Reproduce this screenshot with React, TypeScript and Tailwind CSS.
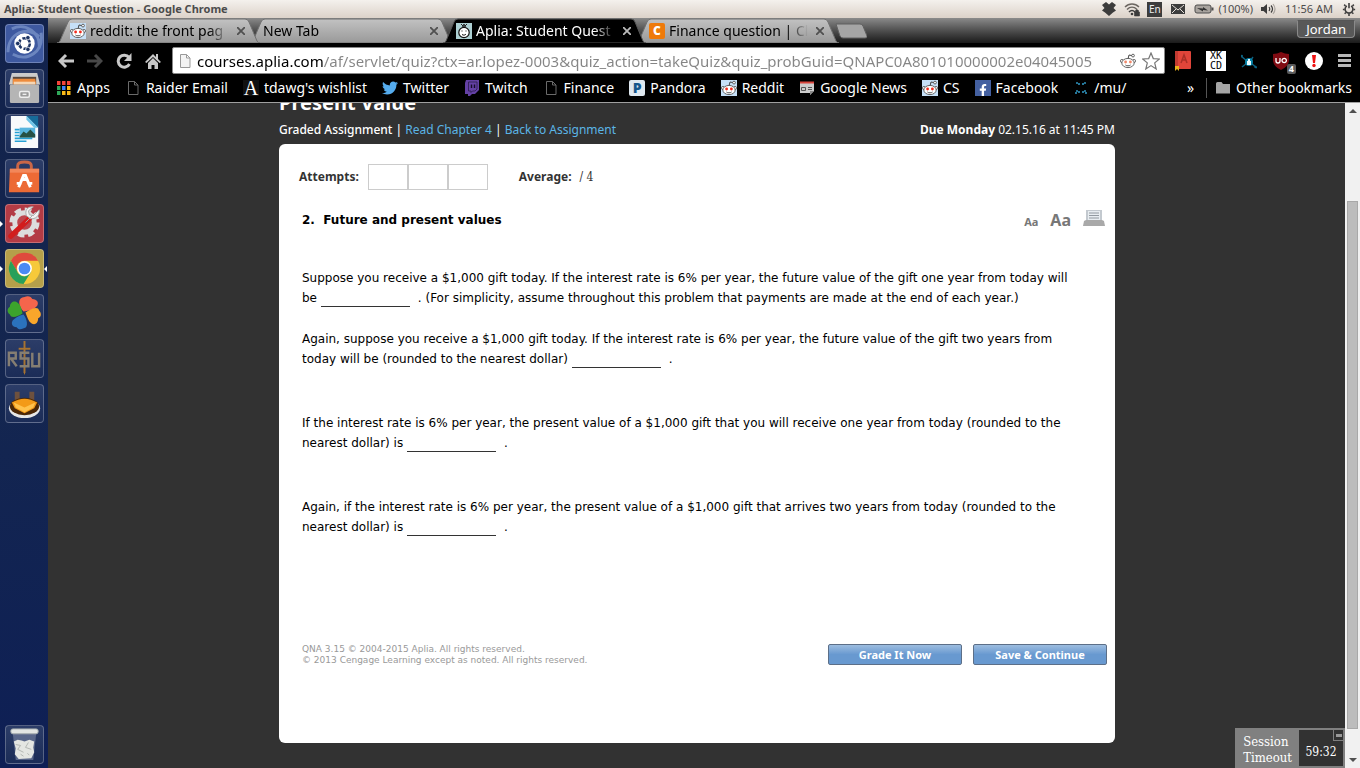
import type { ReactNode } from "react";
import { FaFacebookF, FaTwitter } from "react-icons/fa";

const UI_FONT = "font-['Noto_Sans','Open_Sans',sans-serif]";

function RedditIcon({ plain = false }: { plain?: boolean }) {
  return (
    <svg className="size-4 shrink-0" viewBox="0 0 16 16" aria-hidden="true">
      {!plain && <rect width="16" height="16" fill="#c6e0f7" />}
      <path d="M8 6 9 2l3 .6" fill="none" stroke="#444" strokeWidth="1" />
      <circle cx="13" cy="2.6" r="1.4" fill="#fff" stroke="#444" strokeWidth=".8" />
      <circle cx="2" cy="8" r="1.6" fill="#fff" stroke="#555" strokeWidth=".8" />
      <circle cx="14" cy="8" r="1.6" fill="#fff" stroke="#555" strokeWidth=".8" />
      <ellipse cx="8" cy="10" rx="6.2" ry="4.6" fill="#fff" stroke="#555" strokeWidth=".9" />
      <circle cx="5.6" cy="9" r="1.4" fill={plain ? "#f0886a" : "#f22b1d"} />
      <circle cx="10.4" cy="9" r="1.4" fill={plain ? "#f0886a" : "#f22b1d"} />
      <path d="M5.4 12c1.6 1.1 3.6 1.1 5.2 0" fill="none" stroke="#444" strokeWidth=".9" />
    </svg>
  );
}

function PageIcon({ light = false }: { light?: boolean }) {
  return (
    <svg className="size-4 shrink-0" viewBox="0 0 16 16" aria-hidden="true">
      <path
        d="M3.500 1.500h6l3.500 3.500v9.500h-9.500zM9.500 1.500v3.500h3.500"
        fill={light ? "#f3f3f3" : "none"}
        stroke={light ? "#999" : "#6b6b6b"}
      />
    </svg>
  );
}

function ApliaIcon() {
  return (
    <svg className="size-4 shrink-0" viewBox="0 0 16 16" aria-hidden="true">
      <rect width="16" height="16" fill="#add0d3" />
      <path d="M5 1l2 2 1-2 1 2 2-2M6 4l2-1 2 1" fill="none" stroke="#222" />
      <circle cx="8" cy="9.500" r="5.200" fill="#fff" stroke="#111" strokeWidth="1.200" />
      <path d="M5.500 8h1M9.500 8h1M6 11.500c1.500 1 3 .8 4-.5" fill="none" stroke="#111" />
    </svg>
  );
}

function AppsIcon() {
  const colors = ["#f4453a", "#f4453a", "#f4453a", "#2fa85a", "#3f83f8", "#f9b917", "#2fa85a", "#f9b917", "#f9b917"];
  return (
    <svg className="size-4 shrink-0" viewBox="0 0 16 16" aria-hidden="true">
      {colors.map((c, i) => (
        <rect key={i} x={1 + (i % 3) * 5} y={1 + Math.floor(i / 3) * 5} width="3.500" height="4" fill={c} />
      ))}
    </svg>
  );
}

function TwitchIcon() {
  return (
    <svg className="size-4 shrink-0" viewBox="0 0 16 16" aria-hidden="true">
      <path d="M2 0h13v10l-4 4H8l-2 2H4v-2H1V3z" fill="#6441a5" />
      <path d="M4.500 2h8.500v7l-2 2H8.500L7 12.500V11H4.500z" fill="none" stroke="#2c1c4b" strokeWidth=".8" />
      <path d="M7.500 4.500v3.500M10.500 4.500v3.500" stroke="#150d26" strokeWidth="1.400" />
    </svg>
  );
}

function NewsIcon() {
  return (
    <svg className="size-4 shrink-0" viewBox="0 0 16 16" aria-hidden="true">
      <path d="M1 2h14v9l-4 4v-2H1z" fill="#ccc" />
      <path d="M1 2.500h14" stroke="#d8453c" strokeWidth="2" />
      <path d="M2.500 7.500h4v3h-4zM9 7.500h4M9 9.500h4" fill="none" stroke="#555" />
      <path d="m11 15 4-4h-4z" fill="#888" />
    </svg>
  );
}

function MuIcon() {
  return (
    <svg className="size-4 shrink-0" viewBox="0 0 16 16" aria-hidden="true">
      <path
        d="M3 3h3v3M13 3h-3v3M3 14v-3h3v3M13 14v-3h-3v3"
        fill="none"
        stroke="#2f93bd"
        strokeWidth="1.600"
        strokeDasharray="2 1"
      />
    </svg>
  );
}

function FolderIcon() {
  return (
    <svg className="size-4 shrink-0" viewBox="0 0 16 16" aria-hidden="true">
      <path d="M1 3.500q0-1.500 1.500-1.500h4l1.500 2h7v9.500H1z" fill="#a5a5a5" />
    </svg>
  );
}

function LetterIcon({ children, className }: { children: ReactNode; className: string }) {
  return (
    <span aria-hidden="true" className={`flex size-4 shrink-0 items-center justify-center leading-4 ${className}`}>
      {children}
    </span>
  );
}

const bookmarks: { label: string; icon: ReactNode }[] = [
  { label: "Apps", icon: <AppsIcon /> },
  { label: "Raider Email", icon: <PageIcon /> },
  {
    label: "tdawg's wishlist",
    icon: <LetterIcon className="bg-[#111] font-['Liberation_Serif',serif] text-xl text-white">A</LetterIcon>,
  },
  { label: "Twitter", icon: <FaTwitter className="size-4 shrink-0 text-[#55acee]" /> },
  { label: "Twitch", icon: <TwitchIcon /> },
  { label: "Finance", icon: <PageIcon /> },
  {
    label: "Pandora",
    icon: <LetterIcon className="rounded-xs bg-[#dfe8f0] text-sm font-black text-[#14568c]">P</LetterIcon>,
  },
  { label: "Reddit", icon: <RedditIcon /> },
  { label: "Google News", icon: <NewsIcon /> },
  { label: "CS", icon: <RedditIcon /> },
  {
    label: "Facebook",
    icon: (
      <span className="flex size-4 shrink-0 items-end justify-center bg-[#4460a0]">
        <FaFacebookF className="size-3 text-white" />
      </span>
    ),
  },
  { label: "/mu/", icon: <MuIcon /> },
];

function SystemBar() {
  return (
    <header className="flex h-[18px] shrink-0 items-center justify-between bg-linear-to-b from-[#f4f1ed] to-[#dcd2c9] px-1 text-[#4c4c4c]">
      <span className="text-[11px] leading-4 font-bold">Aplia: Student Question - Google Chrome</span>
      <div className="flex items-center gap-[7px] text-[11px] leading-4">
        <svg className="size-4" viewBox="0 0 16 16" aria-hidden="true">
          <path d="m5 1 3 2.500L11 1l4 3-2.500 3L15 9.500l-3 2L8 15l-4-3.500-3-2L3.500 7 1 4z" fill="#3c3c3c" />
        </svg>
        <svg className="size-4" viewBox="0 0 16 16" fill="none" aria-hidden="true">
          <path d="M1 6c4-4 10-4 14 0M3 8.500c3-3 7-3 10 0" stroke="#6b6661" strokeWidth="1.400" />
          <path d="M5 11c2-2 4-2 6 0" stroke="#3c3c3c" strokeWidth="1.600" />
          <circle cx="8" cy="13" r="1.300" fill="#3c3c3c" />
          <path d="M10.500 11h5v4h-5zM11.500 11V9.500q1.500-1.500 3 0V11" fill="#3c3c3c" stroke="#3c3c3c" strokeWidth=".6" />
        </svg>
        <span className="flex h-[15px] w-[15px] items-center justify-center bg-[#3c3c3c] text-[10px] text-[#eee]">En</span>
        <svg className="mx-px size-4" viewBox="0 0 16 16" aria-hidden="true">
          <rect x="1" y="3" width="14" height="10" fill="#3c3c3c" />
          <path d="m2 4 6 5 6-5M2 12l4-4M14 12l-4-4" fill="none" stroke="#e8e2dc" />
        </svg>
        <span className="flex items-center gap-1">
          <svg className="h-4 w-5" viewBox="0 0 20 16" aria-hidden="true">
            <rect x="1" y="4" width="16" height="8" rx="2" fill="#a9a49f" stroke="#4c4c4c" />
            <path d="M18.500 6.500v3" stroke="#4c4c4c" strokeWidth="2" />
            <path d="m3 7 6 .5V6l5 3.500-5-.5v1.500z" fill="#333" />
          </svg>
          (100%)
        </span>
        <svg className="size-4" viewBox="0 0 16 16" fill="none" aria-hidden="true">
          <path d="M1 6h2.500L7 3v10l-3.500-3H1z" fill="#3c3c3c" />
          <path d="M9 6q1.500 2 0 4M11 4.500q3 3.500 0 7" stroke="#3c3c3c" strokeWidth="1.200" />
          <path d="M13 3q4 5 0 10" stroke="#aaa49e" strokeWidth="1.200" />
        </svg>
        <span className="mx-0.5">11:56 AM</span>
        <svg className="size-3.5" viewBox="0 0 16 16" fill="none" stroke="#3c3c3c" aria-hidden="true">
          <path d="M5.500 4.500a4.500 4.500 0 1 0 5 0M8 1v6" strokeWidth="1.800" />
          <path d="M1 8.500h2M13 8.500h2M3 13.500l1.500-1.500M13 13.500l-1.500-1.500M8 13.500V16M2.500 3 4 4.500M13.500 3 12 4.500" strokeWidth="1.800" />
        </svg>
      </div>
    </header>
  );
}

function LaunchTile({ label, tint, left, right, children }: { label: string; tint: string; left?: boolean; right?: boolean; children: ReactNode }) {
  return (
    <button
      type="button"
      aria-label={label}
      className={`relative ml-[5px] flex h-[39px] w-[39px] items-center justify-center rounded-sm border border-white/25 ${tint}`}
    >
      <svg className="h-[37px] w-[37px]" viewBox="0 0 38 38" aria-hidden="true">
        {children}
      </svg>
      {left && <span className="absolute top-4 -left-1.5 border-y-3 border-l-3 border-y-transparent border-l-white" />}
      {right && <span className="absolute top-4 -right-1 border-y-3 border-r-3 border-y-transparent border-r-white" />}
    </button>
  );
}

function Launcher() {
  const glass = "bg-linear-to-b from-[#2c3d68] to-[#1b2c57]";
  return (
    <nav className="flex w-12 shrink-0 flex-col gap-1.5 bg-linear-to-b from-[#12224b] via-[#142650] to-[#0e1f55] pt-1.5 pb-1">
      <LaunchTile label="Dash" tint="bg-[#3e59a0]">
        <path d="M2 28C2 8 22 0 34 12M36 8c3 20-14 30-29 22M6 4c14-7 30 4 28 20" fill="none" stroke="#8ba3d4" strokeWidth="3" opacity=".6" />
        <circle cx="19" cy="19" r="10.500" fill="#fff" />
        <circle cx="19" cy="19" r="5.500" fill="none" stroke="#1e3565" strokeWidth="2.600" strokeDasharray="9.500 2" />
        <circle cx="12" cy="19" r="2.300" fill="#1e3565" stroke="#fff" strokeWidth=".8" />
        <circle cx="22.500" cy="13" r="2.300" fill="#1e3565" stroke="#fff" strokeWidth=".8" />
        <circle cx="22.500" cy="25" r="2.300" fill="#1e3565" stroke="#fff" strokeWidth=".8" />
      </LaunchTile>
      <LaunchTile label="Files" tint={glass}>
        <path d="M6 3h26l3 12H3z" fill="#ccc" />
        <path d="M7 7h24v10H7z" fill="#594a40" />
        <path d="M7 9h23l1 6H7z" fill="#ee8b3c" />
        <path d="M8 12h22v3H8z" fill="#f5d6b4" />
        <rect x="4" y="15" width="30" height="19" rx="1.500" fill="#b5b5b5" />
        <rect x="14" y="22" width="10" height="6" rx="1.500" fill="#999" stroke="#eee" strokeWidth="1.500" />
        <path d="M17 25h4" stroke="#eee" strokeWidth="1.500" />
      </LaunchTile>
      <LaunchTile label="Writer" tint={glass}>
        <path d="M5 1h18l10 10v23H5z" fill="#f8fafb" />
        <path d="M21 1h12v12z" fill="#176b99" />
        <path d="M21 1v4l8 8h4z" fill="#6dc4e7" />
        <path d="M9 15h5M9 18h5M9 21h5M9 24h18M9 27h12" stroke="#27a1d4" strokeWidth="1.600" />
        <rect x="14" y="13" width="16" height="10" fill="#58b5de" />
        <path d="m14 22 4-5 3 2 4-4 5 5v3H14z" fill="#265145" />
      </LaunchTile>
      <LaunchTile label="Software Center" tint={glass}>
        <path d="M12 12V6q0-4 7-4t7 4v6" fill="none" stroke="#c96647" strokeWidth="3" />
        <path d="M4 9h30v24H3z" fill="#ec6a35" />
        <path d="M4 9h30v4H4z" fill="#f2875a" />
        <path d="m13 28 5-12h2l5 12M11 24h5M22 24h5M16 20h6" fill="none" stroke="#fff" strokeWidth="3" />
      </LaunchTile>
      <LaunchTile label="System Settings" tint="bg-[#b33b45]" left>
        <circle cx="19" cy="18" r="12" fill="none" stroke="#ddd" strokeWidth="7" strokeDasharray="6 3.400" />
        <circle cx="19" cy="18" r="10" fill="#bd464e" stroke="#ddd" strokeWidth="5" />
        <path d="M5 32 24 14" stroke="#d21d1d" strokeWidth="5.500" strokeLinecap="round" />
        <path d="m20 18 7-7M34 5l-6 6-4-1-1-4 5-4c-6-1-9 4-7 9l4 3c5 1 10-3 9-9z" fill="#f2f2f2" stroke="#aaa" />
      </LaunchTile>
      <LaunchTile label="Google Chrome" tint="bg-[#b5a04a]" left right>
        <circle cx="19" cy="19" r="16" fill="#f6c93a" />
        <path d="M5 11a16 16 0 0 1 28 0H19a8 8 0 0 0-7 12z" fill="#df4a3d" />
        <path d="M5 11a16 16 0 0 0 13 24l8-13-6 5a8 8 0 0 1-9-6z" fill="#28a05a" />
        <circle cx="19" cy="19" r="7.600" fill="#fff" />
        <circle cx="19" cy="19" r="6" fill="#4a8af4" />
      </LaunchTile>
      <LaunchTile label="Photos" tint={glass}>
        <path d="M18 17C12 11 12 2 19 2c4-2 7 0 8 2 5 0 7 4 5 7-3 4-8 5-14 6z" fill="#f5654c" />
        <path d="M20 18c6-4 13-7 14-2 3 3 2 7-1 8 0 6-4 7-7 5-3-2-4-6-6-11z" fill="#f9a62b" />
        <path d="M18 20c4 5 5 13 1 14-4 2-7 1-8-1-5 0-6-4-4-7 2-2 6-5 11-6z" fill="#2b72bd" />
        <path d="M17 19c-6 4-12 5-13 1-4-3-2-7 0-8 0-5 5-7 8-4 3 2 4 6 5 11z" fill="#3ca32c" />
      </LaunchTile>
      <LaunchTile label="Game" tint={glass}>
        <path d="M18 1h2v32l-1 3-1-3z" fill="#a77331" />
        <path d="M3 27V13h7v6H5l6 8M24 13h-9v6h8v8h-9M27 13v14h7V13" fill="none" stroke="#857e72" strokeWidth="2.500" />
        <path d="M13 9h12" stroke="#a77331" strokeWidth="2" />
      </LaunchTile>
      <LaunchTile label="Media" tint={glass}>
        <path d="M9 7h5v12H9zM24 7h5v12h-5z" fill="#b46a19" opacity=".5" />
        <ellipse cx="19" cy="24" rx="16" ry="10" fill="#e7e7e7" />
        <ellipse cx="19" cy="22" rx="15" ry="9" fill="#4b2706" />
        <path d="M6 18q13-8 26 0l-3 6-10 5-10-5z" fill="#f39a18" />
        <path d="m8 18 11 5 11-5-2 5-9 5-9-5z" fill="#ffc24d" />
      </LaunchTile>
      <div className="mt-auto">
        <LaunchTile label="Trash" tint={glass}>
          <path d="M7 8h24l-3 27H10z" fill="#667394" opacity=".8" />
          <path d="m8 16 4-2 4 1 3 1 5-2 5 2-1 6 1 5-3 6-13 1-4-5 1-6z" fill="#e4e6e2" />
          <path d="m10 19 5 1-3 4 6 3M23 17l-3 5 6 2M15 29l3 2M22 28l2 2" fill="none" stroke="#b2b6b2" />
          <rect x="5" y="3" width="28" height="5" rx="2" fill="#e3e6e3" stroke="#a7afb0" />
        </LaunchTile>
      </div>
    </nav>
  );
}

function Tab({ title, icon, active, order }: { title: string; icon?: ReactNode; active?: boolean; order: string }) {
  return (
    <div className={`relative -ml-2.5 h-[25px] w-[203px] ${order} ${active ? "text-white" : "text-black"}`}>
      <svg className="absolute inset-0 size-full" viewBox="0 0 203 25" preserveAspectRatio="none" aria-hidden="true">
        <defs>
          <linearGradient id="tab" x2="0" y2="1">
            <stop stopColor="#c2c2c2" />
            <stop offset="1" stopColor="#999" />
          </linearGradient>
        </defs>
        <path
          d="M0 25q2 0 3-2l8-19q1-3 4-3h173q3 0 4 3l8 19q1 2 3 2z"
          fill={active ? "#000" : "url(#tab)"}
          stroke={active ? "#555" : "#707070"}
        />
      </svg>
      <div className="relative flex h-full items-center gap-1 pr-[11px] pl-[13px]">
        {icon}
        <span className="min-w-0 flex-1 overflow-hidden text-sm leading-5 whitespace-nowrap [mask-image:linear-gradient(to_right,#000_85%,transparent)]">
          {title}
        </span>
        <button type="button" aria-label="Close tab" className="flex size-4 items-center justify-center">
          <svg className={`size-2 ${active ? "text-[#bbb]" : "text-[#505050]"}`} viewBox="0 0 8 8" aria-hidden="true">
            <path d="m0 0 8 8M8 0 0 8" stroke="currentColor" strokeWidth="1.800" />
          </svg>
        </button>
      </div>
    </div>
  );
}

function TabStrip() {
  return (
    <div className="flex h-[25px] items-start justify-between bg-linear-to-b from-[#8b8b8b] to-[#1b1b1b] pr-[5px]">
      <div className="flex pl-[19px]">
        <Tab title="reddit: the front pag" icon={<RedditIcon />} order="z-20" />
        <Tab title="New Tab" order="z-10" />
        <Tab title="Aplia: Student Quest" icon={<ApliaIcon />} active order="z-30" />
        <Tab
          title="Finance question | Cl"
          icon={<LetterIcon className="rounded-xs bg-[#ee7a0a] text-xs font-black text-white">C</LetterIcon>}
          order="z-0"
        />
        <button type="button" aria-label="New tab" className="-ml-1 self-center">
          <svg className="h-4 w-8" viewBox="0 0 32 16" aria-hidden="true">
            <path d="M1 1h24q2 0 3 2l4 10q1 2-2 2H8q-2 0-3-2z" fill="#a5a5a5" stroke="#606060" />
          </svg>
        </button>
      </div>
      <button type="button" className="mt-0.5 rounded-b-sm border border-[#8a8a8a] border-t-[#555] bg-[#585858] px-2 text-[13px] leading-4 text-white">
        Jordan
      </button>
    </div>
  );
}

function Toolbar() {
  return (
    <div className="flex h-[35px] items-center bg-black pr-[9px] pl-2.5">
      <div className="flex items-center gap-[13px] pr-[11px]">
        <button type="button" aria-label="Back">
          <svg className="size-4" viewBox="0 0 16 16" fill="none" stroke="#c8c8c8" strokeWidth="3" aria-hidden="true">
            <path d="M2 8h14M8 2 2 8l6 6" />
          </svg>
        </button>
        <button type="button" aria-label="Forward">
          <svg className="size-4" viewBox="0 0 16 16" fill="none" stroke="#484848" strokeWidth="3" aria-hidden="true">
            <path d="M0 8h14M8 2l6 6-6 6" />
          </svg>
        </button>
        <button type="button" aria-label="Reload">
          <svg className="size-4" viewBox="0 0 16 16" aria-hidden="true">
            <path d="M13 4.500A6 6 0 1 0 13.500 11" fill="none" stroke="#c8c8c8" strokeWidth="3" />
            <path d="M15.500 0v8H8z" fill="#c8c8c8" />
          </svg>
        </button>
        <button type="button" aria-label="Home">
          <svg className="size-4" viewBox="0 0 16 16" aria-hidden="true">
            <path d="M8 1 0 9l1.500 1L8 4l6.500 6L16 9l-3-3V1h-2v3z" fill="#c8c8c8" />
            <path d="m3 10 5-5 5 5v6H9.500v-4h-3v4H3z" fill="#c8c8c8" />
          </svg>
        </button>
      </div>
      <div className="flex h-[27px] min-w-0 flex-1 items-center gap-1 rounded-xs border border-[#888] bg-white px-1">
        <PageIcon light />
        <input
          aria-label="Address"
          className="min-w-0 flex-1 bg-[linear-gradient(90deg,#000_127px,#858585_127px)] bg-clip-text text-[15px] leading-6 text-transparent outline-none"
          defaultValue="courses.aplia.com/af/servlet/quiz?ctx=ar.lopez-0003&quiz_action=takeQuiz&quiz_probGuid=QNAPC0A801010000002e04045005"
        />
        <RedditIcon plain />
        <button type="button" aria-label="Bookmark this page" className="ml-0.5">
          <svg className="size-[18px]" viewBox="0 0 18 18" fill="#fff" stroke="#777" strokeWidth="1.200" aria-hidden="true">
            <path d="m9 1 2.300 5.600 6 .4-4.600 3.900L14.200 17 9 13.600 3.800 17l1.500-6.100L.7 7l6-.4z" />
          </svg>
        </button>
      </div>
      <div className="flex items-center gap-[15px] pl-2.5">
        <svg className="h-5 w-4" viewBox="0 0 16 20" aria-hidden="true">
          <rect width="16" height="18" rx="1" fill="#e0453a" />
          <path d="M0 0h3v18H0z" fill="#c23a31" />
          <path d="m6 12 3-8 3 8M7 9h4" fill="none" stroke="#a92f27" strokeWidth="1.500" />
          <path d="M0 15h4v5l-2-2-2 2z" fill="#eab31b" />
        </svg>
        <span className="flex h-5 w-5 flex-col items-center justify-center bg-white font-['DejaVu_Sans_Mono',monospace] text-[10px] leading-[10px] text-black">
          <span>XK</span>
          <span>CD</span>
        </span>
        <svg className="size-4" viewBox="0 0 16 16" aria-hidden="true">
          <path d="m0 3 6 5M1 14l5-4M10 7l2-3M11 11l5 4" stroke="#0c6180" strokeWidth="1.400" />
          <circle cx="0.800" cy="3" r="1.200" fill="#0c6180" />
          <circle cx="14.500" cy="14" r="1.200" fill="#0c6180" />
          <circle cx="8" cy="9" r="4" fill="#0784a9" />
          <path d="M6 8h4v4H6zM7 8V6h2v2" fill="#e8fbff" />
        </svg>
        <span className="relative">
          <svg className="size-[18px]" viewBox="0 0 18 18" aria-hidden="true">
            <path d="M9 0q4 2 8 2v7q-1 6-8 9Q2 15 1 9V2q4 0 8-2z" fill="#800b12" />
            <path d="M4 6v3q0 2 2 2t2-2V6M10 8.500a2.200 2.200 0 1 0 4.400 0 2.200 2.200 0 1 0-4.400 0" fill="none" stroke="#fff" strokeWidth="1.300" />
          </svg>
          <span className="absolute -right-1.5 -bottom-1 rounded-xs bg-[#5b5b5b] px-0.5 text-[9px] leading-[10px] font-bold text-white">4</span>
        </span>
        <svg className="size-[18px]" viewBox="0 0 18 18" aria-hidden="true">
          <circle cx="9" cy="9" r="9" fill="#fff" />
          <path d="M7 3h4l-1 8H8z" fill="#ee1111" />
          <circle cx="9" cy="13.500" r="1.700" fill="#ee1111" />
        </svg>
        <button type="button" aria-label="Menu" className="flex w-[13px] flex-col gap-0.5">
          <span className="h-[3px] bg-[#b8b8b8]" />
          <span className="h-[3px] bg-[#b8b8b8]" />
          <span className="h-[3px] bg-[#b8b8b8]" />
        </button>
      </div>
    </div>
  );
}

function BookmarksBar() {
  return (
    <div className="flex h-[25px] items-center border-b border-[#a0a0a0] bg-black px-2 pb-1 text-sm leading-5 whitespace-nowrap text-white">
      <div className="flex min-w-0 gap-[15px]">
        {bookmarks.map((b) => (
          <a key={b.label} href="#" className="flex items-center gap-[5px]">
            {b.icon}
            {b.label}
          </a>
        ))}
      </div>
      <button type="button" aria-label="More bookmarks" className="mr-3 ml-auto">
        »
      </button>
      <a href="#" className="flex items-center gap-[5px] border-l border-[#555] pl-2">
        <FolderIcon />
        Other bookmarks
      </a>
    </div>
  );
}

function Blank({ id }: { id: string }) {
  return (
    <input
      id={id}
      aria-label={id}
      className="mr-2 h-4 w-[89px] border-b border-[#333] bg-transparent px-1 align-middle outline-none"
    />
  );
}

function ActionButton({ children }: { children: ReactNode }) {
  return (
    <button
      type="button"
      className="h-[21px] w-[134px] rounded-xs border border-[#5c6f88] bg-linear-to-b from-[#9dbde0] via-[#6899d0] to-[#6899d0] text-[11px] leading-4 font-bold text-white"
    >
      {children}
    </button>
  );
}

function Assignment() {
  return (
    <main className="flex min-w-0 flex-1 flex-col overflow-hidden bg-[#323232] pl-px">
      <div className="mx-auto flex w-full max-w-[836px] flex-1 flex-col pb-[25px]">
        <h1 className="-mt-3 text-xl leading-6 font-bold text-white">Present Value</h1>
        <div className="mt-1.5 mb-1.5 flex justify-between text-[12px] leading-[17px] text-white">
          <p>
            <span className="font-medium">Graded Assignment | </span>
            <a href="#" className="text-[#5bb5e6]">Read Chapter 4</a> |{" "}
            <a href="#" className="text-[#5bb5e6]">Back to Assignment</a>
          </p>
          <p>
            <b>Due Monday</b> 02.15.16 at 11:45 PM
          </p>
        </div>
        <section className="flex-1 rounded-md bg-white pt-5 pr-2 pl-[23px] font-['DejaVu_Sans','Verdana',sans-serif] text-black">
          <div className={`-ml-[3px] flex items-center text-[12px] leading-4 text-[#333] ${UI_FONT}`}>
            <b className="mr-[9px]">Attempts:</b>
            <div className="flex h-[26px] w-[120px] divide-x-2 divide-[#ccc] border border-[#ccc]">
              <span className="flex-1" />
              <span className="flex-1" />
              <span className="flex-1" />
            </div>
            <b className="mr-2 ml-[31px]">Average:</b>
            <span className="font-['DejaVu_Serif_Condensed','DejaVu_Serif',serif]">/ 4</span>
          </div>
          <div className="mt-5 flex items-end justify-between">
            <h2 className="text-[12px] leading-5 font-bold">2.&nbsp; Future and present values</h2>
            <div className={`flex items-baseline gap-3 pr-0.5 font-bold text-[#777] ${UI_FONT}`}>
              <button type="button" className="text-[11px] leading-4">Aa</button>
              <button type="button" className="text-base leading-4">Aa</button>
              <button type="button" aria-label="Print">
                <svg className="h-4 w-[22px]" viewBox="0 0 22 16" aria-hidden="true">
                  <path d="M3 0h16v11H3z" fill="#c3c9cf" />
                  <path d="M5 1h12v10H5z" fill="#e8edf1" />
                  <path d="M6 3h10M6 5.500h10M6 8h10" stroke="#9299a0" />
                  <path d="m1 11 2-1h16l2 1 1 5H0z" fill="#a9a9a9" />
                </svg>
              </button>
            </div>
          </div>
          <div className="mt-[38px] text-[12px] leading-5">
            <p>
              Suppose you receive a $1,000 gift today. If the interest rate is 6% per year, the future value of the gift one year from today will
              <br />
              be <Blank id="answer-1" />. (For simplicity, assume throughout this problem that payments are made at the end of each year.)
            </p>
            <p className="mt-[21px]">
              Again, suppose you receive a $1,000 gift today. If the interest rate is 6% per year, the future value of the gift two years from
              <br />
              today will be (rounded to the nearest dollar) <Blank id="answer-2" />.
            </p>
            <p className="mt-11">
              If the interest rate is 6% per year, the present value of a $1,000 gift that you will receive one year from today (rounded to the
              <br />
              nearest dollar) is <Blank id="answer-3" />.
            </p>
            <p className="mt-11">
              Again, if the interest rate is 6% per year, the present value of a $1,000 gift that arrives two years from today (rounded to the
              <br />
              nearest dollar) is <Blank id="answer-4" />.
            </p>
          </div>
          <footer className="mt-[107px] flex items-start justify-between">
            <p className="text-[9px] leading-[11px] text-[#999]">
              QNA 3.15 © 2004-2015 Aplia. All rights reserved.
              <br />© 2013 Cengage Learning except as noted. All rights reserved.
            </p>
            <div className={`flex gap-[11px] ${UI_FONT}`}>
              <ActionButton>Grade It Now</ActionButton>
              <ActionButton>Save &amp; Continue</ActionButton>
            </div>
          </footer>
        </section>
      </div>
    </main>
  );
}

function SessionTimer() {
  return (
    <aside className="absolute right-[15px] bottom-0 flex h-10 items-stretch bg-[#808080] p-0.5 pl-2 font-['DejaVu_Serif_Condensed','DejaVu_Serif',serif] text-[12px] leading-4 text-white">
      <p className="mr-[7px] self-end text-[13px]">
        Session
        <br />
        Timeout
      </p>
      <div className="relative flex w-11 items-end justify-center bg-[#323232] pb-1.5">
        59:32
        <button type="button" aria-label="Minimize" className="absolute top-0 right-0 flex h-[11px] w-2.5 items-center border-b border-l border-[#808080] pl-0.5">
          <span className="h-[3px] w-1.5 bg-[#999]" />
        </button>
      </div>
    </aside>
  );
}

function Scrollbar() {
  return (
    <div className="flex w-[15px] shrink-0 flex-col items-center bg-[#f1f1f1] py-1.5">
      <span className="border-x-4 border-b-4 border-x-transparent border-b-[#505050]" />
      <div className="flex w-full flex-1 flex-col px-0.5 pt-[88px] pb-[29px]">
        <div className="flex-1 border border-[#a8a8a8] bg-[#bcbcbc]" />
      </div>
      <span className="border-x-4 border-t-4 border-x-transparent border-t-[#505050]" />
    </div>
  );
}

export default function App() {
  return (
    <div className={`flex h-screen flex-col overflow-hidden ${UI_FONT}`}>
      <SystemBar />
      <div className="flex min-h-0 flex-1">
        <Launcher />
        <div className="flex min-w-0 flex-1 flex-col">
          <TabStrip />
          <Toolbar />
          <BookmarksBar />
          <div className="relative flex min-h-0 flex-1">
            <Assignment />
            <Scrollbar />
            <SessionTimer />
          </div>
        </div>
      </div>
    </div>
  );
}
